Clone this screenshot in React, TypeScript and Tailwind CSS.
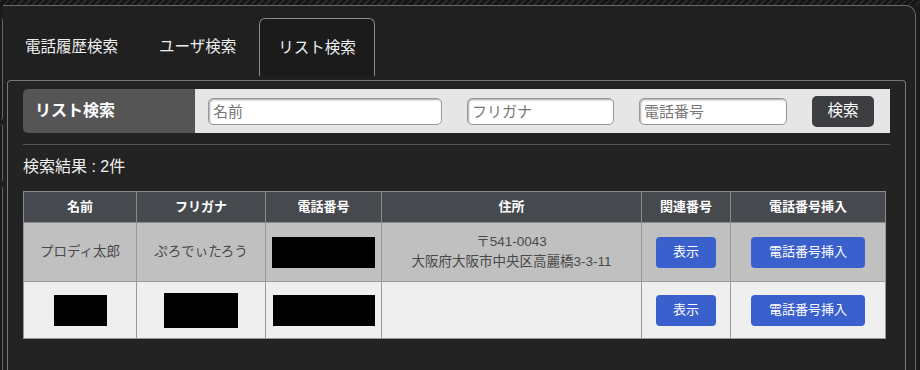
import React from 'react'

const font = { fontFamily: '"Liberation Sans", "Noto Sans CJK JP", sans-serif' }

const Redacted: React.FC<{ w: string; h: string }> = ({ w, h }) => (
  <div className={`mx-auto bg-black ${w} ${h}`} />
)

const App: React.FC = () => {
  const cols = ['名前', 'フリガナ', '電話番号', '住所', '関連番号', '電話番号挿入']

  return (
    <div className="w-[920px] h-[370px] overflow-hidden bg-[#1a1a1a] flex flex-col" style={font}>
      {/* 上部のストライプ */}
      <div className="h-[5px] shrink-0 bg-[repeating-linear-gradient(135deg,#2a2a2a_0px,#2a2a2a_2px,#151515_2px,#151515_5px)]" />

      <div className="flex flex-1 min-h-0">
        {/* 左側の切れたパネル */}
        <div className="w-[3px] shrink-0 flex flex-col gap-[4px] pt-[13px]">
          <div className="h-[102px] border-r border-[#666] rounded-r-[3px]" />
          <div className="h-[58px] border-r border-[#666] rounded-r-[3px]" />
          <div className="flex-1 border-r border-[#666] rounded-tr-[3px]" />
        </div>

        {/* メインパネル */}
        <div className="w-[913px] shrink-0 bg-[#202020] border-t border-r border-[#6a6a6a] rounded-tr-[10px] flex flex-col pl-[4px] pr-[9px]">
          {/* タブ */}
          <div className="flex gap-[5px] pt-[12px] h-[70px] shrink-0">
            <div className="px-[18px] flex items-center text-[15.5px] text-[#eeeeee]">電話履歴検索</div>
            <div className="px-[18px] flex items-center text-[15.5px] text-[#eeeeee]">ユーザ検索</div>
            <div className="px-[18px] flex items-center text-[15.5px] text-[#eeeeee] bg-[#1b1b1b] border border-b-0 border-[#8a8a8a] rounded-t-[6px]">
              リスト検索
            </div>
          </div>

          {/* 内側パネル */}
          <div className="mt-[4px] flex-1 border border-b-0 border-[#777] rounded-t-[4px] bg-[#232323] px-[15px] pt-[8px]">
            {/* 検索バー */}
            <div className="flex h-[44px] rounded-l-[5px] overflow-hidden">
              <div className="w-[172px] bg-[#555555] flex items-center pl-[12px] text-[16px] font-bold text-white">
                リスト検索
              </div>
              <div className="flex-1 bg-[#e6e6e6] flex items-center pl-[13px]">
                <input
                  placeholder="名前"
                  className="w-[234px] h-[27px] bg-white border border-[#999] rounded-[5px] shadow-[inset_1px_1px_2px_rgba(0,0,0,0.35)] px-[4px] text-[15px] placeholder:text-[#777] outline-none"
                  style={font}
                />
                <input
                  placeholder="フリガナ"
                  className="ml-[25px] w-[147px] h-[27px] bg-white border border-[#999] rounded-[5px] shadow-[inset_1px_1px_2px_rgba(0,0,0,0.35)] px-[4px] text-[15px] placeholder:text-[#777] outline-none"
                  style={font}
                />
                <input
                  placeholder="電話番号"
                  className="ml-[25px] w-[148px] h-[27px] bg-white border border-[#999] rounded-[5px] shadow-[inset_1px_1px_2px_rgba(0,0,0,0.35)] px-[4px] text-[15px] placeholder:text-[#777] outline-none"
                  style={font}
                />
                <button className="ml-[25px] w-[62px] h-[31px] rounded-[5px] bg-[#3d3e42] text-white text-[15.5px]">
                  検索
                </button>
              </div>
            </div>

            <div className="mt-[11px] h-px bg-[#555]" />

            <div className="mt-[12px] text-[16px] text-[#eeeeee] leading-[20px]">検索結果 : 2件</div>

            {/* 結果テーブル */}
            <table className="mt-[14px] w-[862px] border-collapse text-[13.5px] table-fixed">
              <colgroup>
                <col className="w-[113px]" />
                <col className="w-[129px]" />
                <col className="w-[116px]" />
                <col className="w-[260px]" />
                <col className="w-[89px]" />
                <col className="w-[155px]" />
              </colgroup>
              <thead>
                <tr className="h-[31px] bg-[#46494e]">
                  {cols.map((c) => (
                    <th key={c} className="border border-[#8a8a8a] text-white font-bold text-[13px]">
                      {c}
                    </th>
                  ))}
                </tr>
              </thead>
              <tbody>
                <tr className="h-[59px] bg-[#c0c0c0] text-[#4a4a4a]">
                  <td className="border border-[#999] text-center">プロディ太郎</td>
                  <td className="border border-[#999] text-center">ぷろでぃたろう</td>
                  <td className="border border-[#999]">
                    <Redacted w="w-[103px]" h="h-[31px]" />
                  </td>
                  <td className="border border-[#999] text-center leading-[20px]">
                    〒541-0043
                    <br />
                    大阪府大阪市中央区高麗橋3-3-11
                  </td>
                  <td className="border border-[#999] text-center">
                    <button className="w-[60px] h-[31px] rounded-[4px] bg-[#3a60cd] text-white text-[13px]">表示</button>
                  </td>
                  <td className="border border-[#999] text-center">
                    <button className="w-[114px] h-[31px] rounded-[4px] bg-[#3a60cd] text-white text-[13px]">電話番号挿入</button>
                  </td>
                </tr>
                <tr className="h-[57px] bg-[#efefef] text-[#4a4a4a]">
                  <td className="border border-[#999]">
                    <Redacted w="w-[53px]" h="h-[31px]" />
                  </td>
                  <td className="border border-[#999]">
                    <Redacted w="w-[74px]" h="h-[35px]" />
                  </td>
                  <td className="border border-[#999]">
                    <Redacted w="w-[102px]" h="h-[31px]" />
                  </td>
                  <td className="border border-[#999]" />
                  <td className="border border-[#999] text-center">
                    <button className="w-[60px] h-[31px] rounded-[4px] bg-[#3a60cd] text-white text-[13px]">表示</button>
                  </td>
                  <td className="border border-[#999] text-center">
                    <button className="w-[114px] h-[31px] rounded-[4px] bg-[#3a60cd] text-white text-[13px]">電話番号挿入</button>
                  </td>
                </tr>
              </tbody>
            </table>
          </div>
        </div>
      </div>
    </div>
  )
}

export default App
